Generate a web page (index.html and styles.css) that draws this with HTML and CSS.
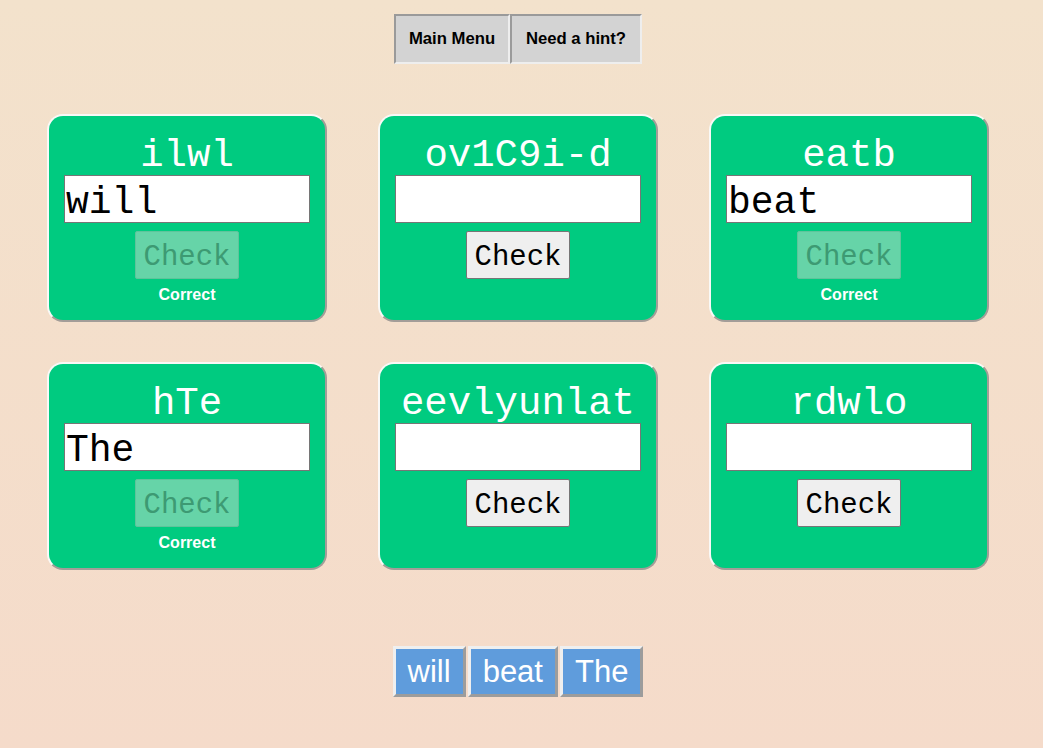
FILE: index.html
```html
<!DOCTYPE html>
<html>
<head>
<meta charset="utf-8">
<link rel="stylesheet" href="styles.css">
</head>
<body>
<div class="page">
  <nav class="topnav">
    <button class="nav-btn">Main Menu</button><button class="nav-btn">Need a hint?</button>
  </nav>
  <div class="grid">
    <div class="card">
      <div class="scramble">ilwl</div>
      <input class="answer" type="text" value="will">
      <button class="check" disabled>Check</button>
      <div class="status">Correct</div>
    </div>
    <div class="card">
      <div class="scramble">ov1C9i-d</div>
      <input class="answer" type="text" value="">
      <button class="check">Check</button>
      <div class="status"></div>
    </div>
    <div class="card">
      <div class="scramble">eatb</div>
      <input class="answer" type="text" value="beat">
      <button class="check" disabled>Check</button>
      <div class="status">Correct</div>
    </div>
    <div class="card">
      <div class="scramble">hTe</div>
      <input class="answer" type="text" value="The">
      <button class="check" disabled>Check</button>
      <div class="status">Correct</div>
    </div>
    <div class="card">
      <div class="scramble">eevlyunlat</div>
      <input class="answer" type="text" value="">
      <button class="check">Check</button>
      <div class="status"></div>
    </div>
    <div class="card">
      <div class="scramble">rdwlo</div>
      <input class="answer" type="text" value="">
      <button class="check">Check</button>
      <div class="status"></div>
    </div>
  </div>
  <div class="words">
    <span class="word">will</span><span class="word">beat</span><span class="word">The</span>
  </div>
</div>
</body>
</html>
```

FILE: styles.css
```css
html, body {
  margin: 0;
  padding: 0;
  height: 100%;
}
body {
  background: linear-gradient(to bottom, #f3e2cc, #f5dbca);
  font-family: "Liberation Sans", Arial, sans-serif;
  min-height: 748px;
}
.page {
  width: 1036px;
  display: flex;
  flex-direction: column;
  align-items: center;
  padding-top: 14px;
}
.topnav {
  display: flex;
}
.nav-btn {
  height: 50px;
  margin: 0;
  padding: 0 10px;
  background: #d3d3d3;
  border: 2px solid;
  border-color: #9a9a9a #eeeeee #eeeeee #9a9a9a;
  font-family: "Liberation Sans", Arial, sans-serif;
  font-weight: bold;
  font-size: 16.7px;
  color: #000;
}
.nav-btn:first-child {
  width: 116px;
}
.nav-btn:last-child {
  width: 132px;
}
.grid {
  margin-top: 50px;
  display: grid;
  grid-template-columns: repeat(3, 280px);
  column-gap: 51px;
  row-gap: 40px;
}
.card {
  box-sizing: border-box;
  height: 208px;
  background: #00cb80;
  border: 2px solid;
  border-color: #f9f9f7 #a39d98 #a39d98 #f9f9f7;
  border-radius: 16px;
  display: flex;
  flex-direction: column;
  align-items: center;
  padding-top: 19px;
}
.scramble {
  font-family: "Liberation Mono", "Courier New", monospace;
  font-size: 39px;
  line-height: 42px;
  height: 40px;
  color: #ffffff;
  white-space: nowrap;
}
.answer {
  box-sizing: border-box;
  width: 246px;
  height: 48px;
  margin: 0;
  padding: 6px 1px 0;
  border: 1px solid #767676;
  background: #fff;
  font-family: "Liberation Mono", "Courier New", monospace;
  font-size: 38px;
  color: #000;
  outline: none;
}
.check {
  box-sizing: border-box;
  width: 104px;
  height: 48px;
  margin-top: 8px;
  padding: 5px 0 0;
  background: #efefef;
  border: 1px solid #767676;
  border-radius: 2px;
  font-family: "Liberation Mono", "Courier New", monospace;
  font-size: 29px;
  color: #000;
}
.check:disabled {
  background: #66d4a8;
  border-color: #5ec49b;
  color: #3d9a73;
}
.status {
  margin-top: 7px;
  font-family: "Liberation Sans", Arial, sans-serif;
  font-weight: bold;
  font-size: 16px;
  line-height: 18px;
  color: #fff;
}
.words {
  margin-top: 76px;
  display: flex;
  gap: 2px;
}
.word {
  box-sizing: border-box;
  height: 51px;
  padding: 0 12px;
  background: #5f9cdc;
  border: 3px solid;
  border-color: #efefef #9c9c9c #9c9c9c #efefef;
  font-family: "Liberation Sans", Arial, sans-serif;
  font-size: 31px;
  line-height: 45px;
  color: #fff;
}
```
